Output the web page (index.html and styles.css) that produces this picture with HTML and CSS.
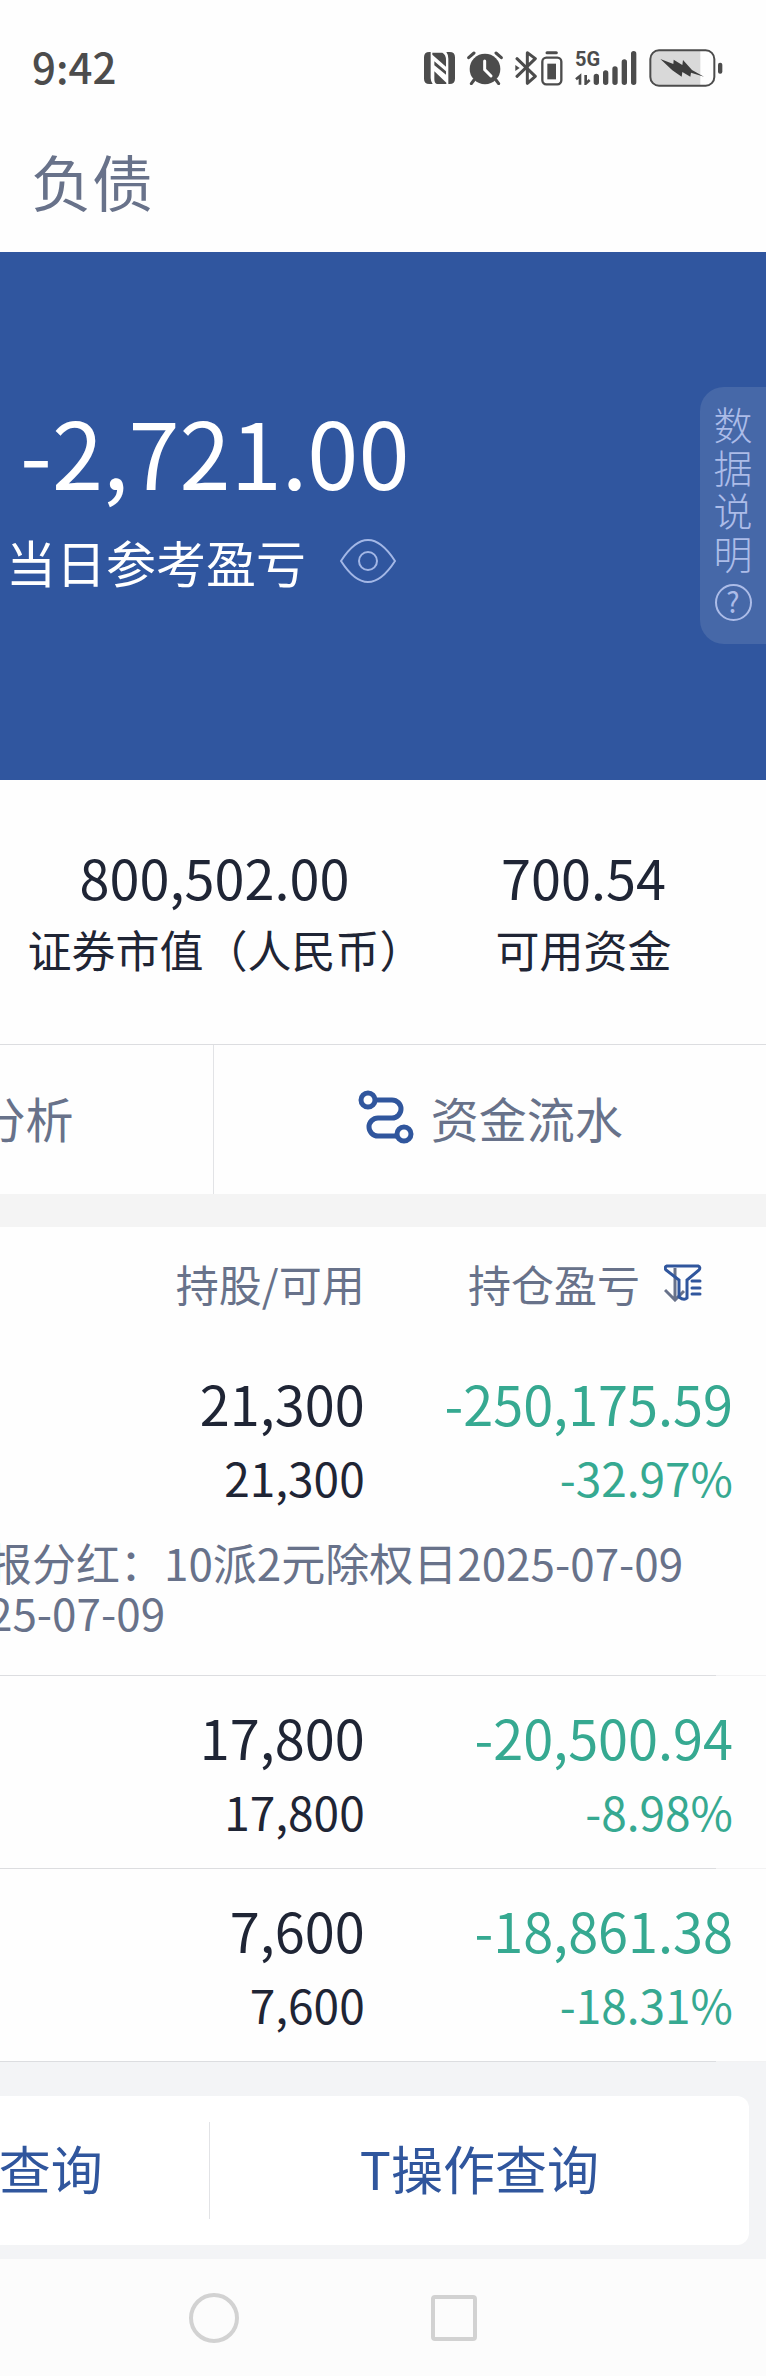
FILE: index.html
```html
<!DOCTYPE html>
<html lang="zh-CN">
  <head>
    <meta charset="UTF-8" />
    <meta name="viewport" content="width=device-width, initial-scale=1.0" />
    <title>负债</title>
    <link rel="stylesheet" href="styles.css">
  </head>
  <body>
    <header class="status-bar">
      <span class="time">9:42</span>
      <div class="status-icons">
        <svg width="31" height="32" viewBox="45 64 93 96">
          <path d="M61 64H65V142Q65 152 71 160H61Q45 160 45 144V80Q45 64 61 64ZM112 64H122Q138 64 138 80V144Q138 160 122 160H118V84Q118 72 112 64Z" fill="#4c4c4c" />
          <path d="M70 66H100Q111 72 111 88V108L70 72ZM76 92L111 122V132L76 104ZM76 122L112 156V160H84Q76 158 76 146Z" fill="#4c4c4c" />
        </svg>
        <svg width="36" height="34" viewBox="174 61 108 102">
          <circle cx="228" cy="115" r="46" fill="#4c4c4c" />
          <path d="M179 81L195 67M261 67L277 81M195 148L187 159M261 148L269 159" stroke="#4c4c4c" stroke-width="9" stroke-linecap="round" />
          <path d="M227 91V117L246 136" fill="none" stroke="#fff" stroke-width="9" stroke-linecap="round" />
        </svg>
        <svg width="48" height="36" viewBox="317 58 144 108">
          <path d="M323 84L378 137L354 158V66L378 84L323 137" fill="none" stroke="#4c4c4c" stroke-width="9" stroke-linejoin="round" stroke-linecap="round" />
          <path d="M318 103L331 112L318 121Z" fill="#4c4c4c" />
          <path d="M413 66H441" stroke="#4c4c4c" stroke-width="9" stroke-linecap="round" />
          <rect x="399" y="81" width="57" height="80" rx="12" fill="none" stroke="#4c4c4c" stroke-width="7" />
          <rect x="414" y="99" width="26" height="47" fill="#4c4c4c" />
        </svg>
        <div class="signal">
          <span class="network">5G</span>
          <svg width="62" height="34" viewBox="496 62 186 102">
            <path d="M560 138V156M588 128V156M616 116V156M644 95V156M672 70V156" stroke="#4c4c4c" stroke-width="16" stroke-linecap="round" />
            <path d="M499 147L511 137V163M528 134V160L540 149" fill="none" stroke="#4c4c4c" stroke-width="8" />
          </svg>
        </div>
        <svg width="74" height="38" viewBox="716 55 222 114">
          <path d="M742 61H870V164H742Q722 164 722 142V83Q722 61 742 61Z" fill="#d9d9d9" />
          <rect x="720" y="59" width="192" height="106" rx="26" fill="none" stroke="#4c4c4c" stroke-width="6" />
          <rect x="923" y="96" width="13" height="33" rx="6" fill="#4c4c4c" />
          <path d="M750 85L789 100L790 87L816 103L818 88L845 118L881 138L842 126L840 138L816 124L814 138L786 119Z" fill="#3d3d3d" />
        </svg>
      </div>
    </header>
    <h1 class="page-title">负债</h1>

    <section class="summary">
      <div class="profit">-2,721.00</div>
      <div class="profit-label">
        <span>当日参考盈亏</span>
        <button type="button" class="icon-btn" aria-label="隐藏金额">
          <svg width="56" height="44" viewBox="0 0 56 44" fill="none" stroke="#a3b7e6" stroke-width="2">
            <path d="M1 22C10 8 20 1 28 1S46 8 55 22C46 36 36 43 28 43S10 36 1 22Z" />
            <circle cx="28" cy="22" r="9" />
          </svg>
        </button>
      </div>
      <button type="button" class="data-note">
        <span class="data-note-text">数据说明</span>
        <span class="help">?</span>
      </button>
    </section>

    <section class="metrics">
      <div class="metric">
        <div class="metric-value">800,502.00</div>
        <div class="metric-label">证券市值（人民币<span class="half">）</span></div>
      </div>
      <div class="metric">
        <div class="metric-value">700.54</div>
        <div class="metric-label">可用资金</div>
      </div>
    </section>

    <nav class="tabs">
      <a href="#" class="tab tab-left">分析</a>
      <a href="#" class="tab">
        <svg width="56" height="54" viewBox="0 0 56 54" fill="none" stroke="#30569d" stroke-width="5">
          <path d="M16 10H34A9 9 0 0 1 34 28H20A9 9 0 0 0 20 46H38" />
          <circle cx="10" cy="10" r="7" />
          <circle cx="46" cy="44" r="7" />
        </svg>
        <span>资金流水</span>
      </a>
    </nav>

    <section class="holdings-wrap">
      <table class="holdings">
        <thead>
          <tr>
            <th>持股/可用</th>
            <th>
              <span class="sort">持仓盈亏
                <svg width="38" height="38" viewBox="0 0 38 38" fill="none" stroke-width="3">
                  <path d="M11 4V36M1 26L11 36L20 27" stroke="#68728a" />
                  <path d="M3 2H34Q37 3 35 6L23 16V34Q20 37 15 33V16L2 6Q0 3 3 2Z" stroke="#30569d" />
                  <path d="M28 17H36M28 24H36M28 30H36" stroke="#30569d" stroke-linecap="round" />
                </svg>
              </span>
            </th>
          </tr>
        </thead>
        <tbody>
          <tr>
            <td><div class="main">21,300</div><div class="sub">21,300</div></td>
            <td class="loss"><div class="main">-250,175.59</div><div class="sub">-32.97%</div></td>
          </tr>
          <tr>
            <td colspan="2" class="dividend">
              <div class="dividend-text">报分红：10派2元除权日2025-07-09<br />25-07-09</div>
            </td>
          </tr>
        </tbody>
        <tbody>
          <tr>
            <td><div class="main">17,800</div><div class="sub">17,800</div></td>
            <td class="loss"><div class="main">-20,500.94</div><div class="sub">-8.98%</div></td>
          </tr>
        </tbody>
        <tbody>
          <tr>
            <td><div class="main">7,600</div><div class="sub">7,600</div></td>
            <td class="loss"><div class="main">-18,861.38</div><div class="sub">-18.31%</div></td>
          </tr>
        </tbody>
      </table>
    </section>

    <section class="queries">
      <div class="query-card">
        <a href="#" class="query query-left"><span>查询</span></a>
        <a href="#" class="query"><span>T操作查询</span></a>
      </div>
    </section>

    <footer class="system-nav">
      <button type="button" class="nav-home" aria-label="主页"></button>
      <button type="button" class="nav-recent" aria-label="最近任务"></button>
    </footer>
  </body>
</html>
```

FILE: styles.css
```css
* {
  box-sizing: border-box;
}

body {
  margin: 0;
  font-family: "Noto Sans CJK SC", sans-serif;
  background-color: #fefefe;
  color: #1f2535;
  overflow-x: hidden;
}

a {
  text-decoration: none;
}

button {
  padding: 0;
  border: none;
  background: none;
  font-family: inherit;
  cursor: pointer;
}

svg {
  display: block;
  flex: none;
}

.status-bar {
  display: flex;
  justify-content: space-between;
  align-items: center;
  height: 136px;
  padding: 0 43px 0 32px;
  color: #4c4c4c;
}

.time {
  font-size: 42px;
  line-height: 60px;
  font-weight: 500;
  padding-bottom: 4px;
}

.status-icons {
  display: flex;
  align-items: center;
  gap: 12px;
}

.signal {
  position: relative;
}

.network {
  position: absolute;
  top: -3px;
  left: 0;
  font-family: "Liberation Sans Narrow", Roboto, sans-serif;
  font-size: 20px;
  font-weight: 700;
  line-height: 22px;
}

.page-title {
  margin: 0;
  padding: 0 31px 26px;
  font-size: 61px;
  line-height: 90px;
  font-weight: 400;
  color: #68728a;
}

.summary {
  position: relative;
  padding: 140px 8px 182px 6px;
  background-color: #30569f;
  color: #fff;
}

.profit {
  padding-left: 14px;
  font-size: 92px;
  line-height: 116px;
}

.profit-label {
  display: flex;
  align-items: center;
  gap: 34px;
  padding-top: 16px;
  font-size: 50px;
  line-height: 74px;
}

.data-note {
  position: absolute;
  top: 135px;
  right: 0;
  display: flex;
  flex-direction: column;
  align-items: center;
  gap: 10px;
  width: 66px;
  padding: 15px 0 23px;
  border-radius: 24px 0 0 24px;
  background-color: #4668a8;
  color: #acbce8;
}

.data-note-text {
  width: 40px;
  font-size: 39px;
  line-height: 43px;
  font-weight: 300;
  word-break: break-all;
}

.help {
  width: 37px;
  height: 37px;
  border: 2px solid #acbce8;
  border-radius: 50%;
  font-size: 28px;
  line-height: 31px;
}

.metrics {
  display: grid;
  grid-template-columns: 56% 1fr;
  padding: 60px 0;
  text-align: center;
}

.metric:last-child {
  padding-right: 28px;
}

.metric-value {
  font-size: 54px;
  line-height: 74px;
}

.metric-label {
  font-size: 44px;
  line-height: 70px;
  white-space: nowrap;
}

/* closing bracket takes half a cell so the label stays centered */
.half {
  font-feature-settings: "halt";
}

.tabs {
  display: grid;
  grid-template-columns: 28% 1fr;
  border-top: 1px solid #dcdde0;
}

.tab {
  display: flex;
  justify-content: center;
  align-items: center;
  gap: 17px;
  height: 149px;
  padding-bottom: 6px;
  font-size: 48px;
  color: #68728a;
  white-space: nowrap;
}

.tab-left {
  justify-content: flex-end;
  padding-right: 140px;
  border-right: 1px solid #e2e3e6;
}

.holdings-wrap {
  border-top: 33px solid #f4f4f4;
}

.holdings {
  width: 100%;
  border-collapse: collapse;
  table-layout: fixed;
  text-align: right;
}

.holdings th {
  height: 115px;
  padding: 0 0 4px;
  font-size: 43px;
  font-weight: 400;
  text-align: right;
  color: #68728a;
}

.holdings th:first-child {
  width: 48%;
  padding-right: 3px;
}

.sort {
  display: flex;
  justify-content: flex-end;
  align-items: center;
  gap: 24px;
  padding-right: 64px;
}

.holdings tbody {
  background: linear-gradient(to right, #dcdde0 calc(100% - 50px), #f2f2f3 0) bottom / 100% 1px no-repeat;
}

.holdings td {
  padding: 23px 33px 21px 0;
}

.holdings td:first-child {
  padding-right: 3px;
}

.main {
  font-size: 54px;
  line-height: 76px;
}

.sub {
  font-size: 46px;
  line-height: 73px;
}

.loss {
  color: #36a991;
}

.holdings .dividend {
  padding: 2px 0 39px;
  font-size: 44px;
  line-height: 50px;
  text-align: left;
  color: #68728a;
}

.dividend-text {
  margin-left: -12px;
  white-space: nowrap;
}

.queries {
  padding: 34px 17px 14px 0;
  background-color: #f3f4f6;
}

.query-card {
  display: grid;
  grid-template-columns: 28% 1fr;
  padding: 26px 0;
  border-radius: 0 12px 12px 0;
  background-color: #fff;
}

.query {
  display: flex;
  justify-content: center;
  align-items: center;
  height: 97px;
  padding-bottom: 6px;
  font-size: 52px;
  color: #30569d;
  white-space: nowrap;
}

.query-left {
  justify-content: flex-end;
  padding-right: 106px;
  border-right: 1px solid #e2e3e6;
}

.system-nav {
  display: grid;
  grid-template-columns: 56% 50px;
  align-items: center;
  justify-items: center;
  height: 117px;
  background-color: #fcfcfc;
}

.nav-home {
  width: 50px;
  height: 50px;
  border: 4px solid #d2d2d2;
  border-radius: 50%;
}

.nav-recent {
  width: 46px;
  height: 46px;
  border: 4px solid #d2d2d2;
  border-radius: 4px;
}
```
